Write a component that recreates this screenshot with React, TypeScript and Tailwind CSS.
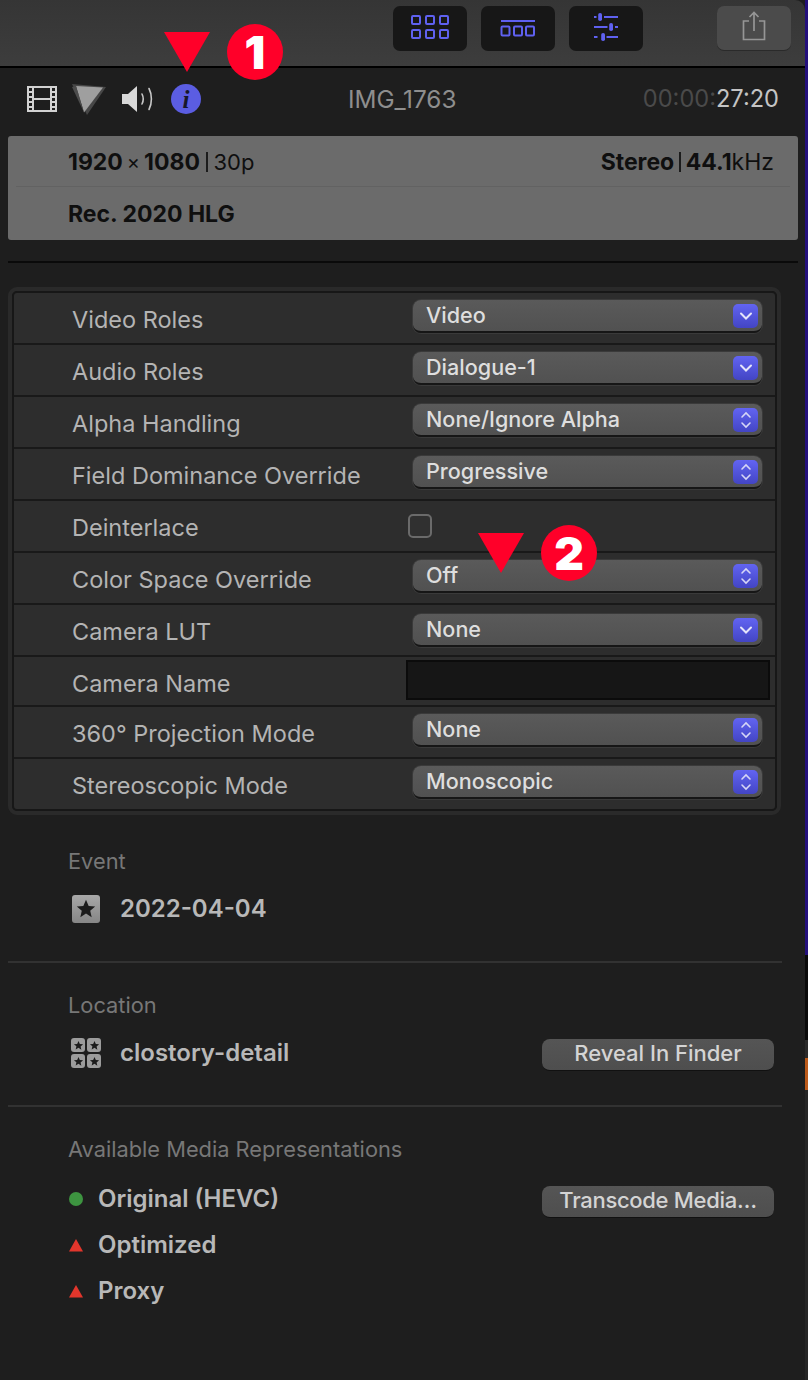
const fontStack = { fontFamily: 'Inter, "Liberation Sans", sans-serif' }

const rows = [
  { label: 'Video Roles', value: 'Video', kind: 'down' },
  { label: 'Audio Roles', value: 'Dialogue-1', kind: 'down' },
  { label: 'Alpha Handling', value: 'None/Ignore Alpha', kind: 'updown' },
  { label: 'Field Dominance Override', value: 'Progressive', kind: 'updown' },
  { label: 'Deinterlace', kind: 'check' },
  { label: 'Color Space Override', value: 'Off', kind: 'updown' },
  { label: 'Camera LUT', value: 'None', kind: 'down', low: true },
  { label: 'Camera Name', kind: 'input' },
  { label: '360° Projection Mode', value: 'None', kind: 'updown' },
  { label: 'Stereoscopic Mode', value: 'Monoscopic', kind: 'updown' },
]

const Star = ({ size, fill }: { size: number; fill: string }) => (
  <svg width={size} height={size} viewBox="0 0 24 24">
    <path
      d="M12 2l2.900 6.600 7.100.7-5.400 4.700 1.600 7L12 16.900 5.800 20.900l1.600-7L2 9.300l7.100-.7z"
      fill={fill}
    />
  </svg>
)

const PopupSelect = ({ value, kind, low }: { value: string; kind: string; low?: boolean }) => (
  <div
    className={`flex h-[33px] w-[349px] items-center rounded-[8px] border-b-2 border-[#161616] bg-gradient-to-b from-[#5a5a5a] to-[#515151] pl-[13px] pr-[4px] shadow-[0_0_0_1px_#3a3a3a] ${
      low ? 'mt-[9px]' : 'mt-[7px]'
    }`}
  >
    <span className="text-[21.600px] font-medium text-[#dedede]">{value}</span>
    <div className="ml-auto flex h-[24px] w-[25px] items-center justify-center rounded-[5px] bg-gradient-to-b from-[#6264f2] to-[#4345c4]">
      {kind === 'down' ? (
        <svg width="14" height="10" viewBox="0 0 14 10" fill="none">
          <path d="M2 2.500l5 5 5-5" stroke="#e4e4fa" strokeWidth="2" strokeLinecap="round" />
        </svg>
      ) : (
        <svg width="12" height="18" viewBox="0 0 12 18" fill="none">
          <path d="M2 6l4-4 4 4M2 12l4 4 4-4" stroke="#d6d6f6" strokeWidth="1.600" strokeLinecap="round" />
        </svg>
      )}
    </div>
  </div>
)

const SettingRow = ({ row, last }: { row: (typeof rows)[number]; last: boolean }) => (
  <div
    className={`flex items-start ${last ? 'h-[50px]' : 'border-b-2 border-[#191919]'} ${
      row.kind === 'input' ? 'h-[50px]' : last ? '' : 'h-[52px]'
    }`}
  >
    <div className="mt-[12px] w-[399px] pl-[58px] text-[23.500px] leading-[30px] whitespace-nowrap text-[#b4b4b4]">
      {row.label}
    </div>
    {row.kind === 'check' && (
      <div className="mt-[13px] -ml-[5px] h-[24px] w-[24px] rounded-[5px] border-2 border-[#6a6a6a] bg-[#303030]" />
    )}
    {row.kind === 'input' && (
      <div className="mt-[3px] -ml-[7px] h-[40px] w-[364px] border-2 border-[#0b0b0b] bg-[#161616]" />
    )}
    {row.value && <PopupSelect value={row.value} kind={row.kind} low={row.low} />}
  </div>
)

const ActionButton = ({ children, tight }: { children: string; tight?: boolean }) => (
  <div
    className={`flex h-[32px] w-[232px] items-center justify-center rounded-[8px] border-b border-[#111] bg-gradient-to-b from-[#555] to-[#4e4e4e] text-[22px] font-medium whitespace-nowrap text-[#d4d4d4] ${
      tight ? 'tracking-[-0.3px]' : ''
    }`}
  >
    <span className="-mt-[3px]">{children}</span>
  </div>
)

const ToolButton = ({ children }: { children: React.ReactNode }) => (
  <div className="flex h-[45px] w-[74px] items-center justify-center rounded-[7px] bg-[#171717]">{children}</div>
)

const Annotation = ({ n, className }: { n: string; className: string }) => (
  <div className={`absolute flex items-center ${className}`}>
    <svg width="46" height="40" viewBox="0 0 46 40">
      <path d="M0 0h46L23 40z" fill="#ff0029" />
    </svg>
    <div className="ml-[17px] flex h-[56px] w-[56px] items-center justify-center rounded-full bg-[#ff0029] text-[46px] leading-none font-black text-white">
      {n}
    </div>
  </div>
)

export default function App() {
  return (
    <div className="relative flex h-[1380px] w-[808px] overflow-hidden bg-[#1e1e1e]" style={fontStack}>
      <div className="flex w-[805px] flex-col">
        {/* top toolbar */}
        <div className="flex h-[68px] gap-[14px] rounded-tr-[10px] border-b-2 border-black bg-gradient-to-b from-[#353535] to-[#3d3d3d] pt-[6px] pl-[393px]">
          <ToolButton>
            <svg className="-mt-[3px]" width="40" height="26" viewBox="0 0 40 26" fill="none" stroke="#5f61f0" strokeWidth="2">
              <rect x="2" y="2" width="8" height="8" rx="1" />
              <rect x="16" y="2" width="8" height="8" rx="1" />
              <rect x="30" y="2" width="8" height="8" rx="1" />
              <rect x="2" y="16" width="8" height="8" rx="1" />
              <rect x="16" y="16" width="8" height="8" rx="1" />
              <rect x="30" y="16" width="8" height="8" rx="1" />
            </svg>
          </ToolButton>
          <ToolButton>
            <svg className="-mt-[2px]" width="36" height="18" viewBox="0 0 36 18" fill="none" stroke="#5f61f0" strokeWidth="2">
              <path d="M1 2h34" />
              <rect x="1.500" y="7.500" width="8" height="9" rx="1" />
              <rect x="14" y="7.500" width="8" height="9" rx="1" />
              <rect x="26" y="7.500" width="8" height="9" rx="1" />
            </svg>
          </ToolButton>
          <ToolButton>
            <svg className="-mt-[3px]" width="26" height="30" viewBox="0 0 26 30" fill="none">
              <path d="M1 5h2.500M11 5h14M1 15h13.500M22 15h3M1 25h3.500M13.500 25h11.500" stroke="#5f61f0" strokeWidth="1.800" />
              <rect x="5.200" y="1" width="3.800" height="8" rx="1.800" fill="#5f61f0" />
              <rect x="16.200" y="11" width="3.800" height="8" rx="1.800" fill="#5f61f0" />
              <rect x="8.200" y="21" width="3.800" height="8" rx="1.800" fill="#5f61f0" />
            </svg>
          </ToolButton>
          <div className="ml-[60px] flex h-[44px] w-[74px] items-center justify-center rounded-[7px] bg-[#4b4b4b] shadow-[0_1px_0_#2a2a2a]">
            <svg className="-mt-[4px]" width="24" height="30" viewBox="0 0 24 30" fill="none" stroke="#969696" strokeWidth="1.700">
              <path d="M7 10H1.500v18.500h21V10H17M12 20V1.500M7.500 6L12 1.500 16.500 6" />
            </svg>
          </div>
        </div>

        {/* inspector tabs */}
        <div className="flex h-[62px] items-center pl-[27px]">
          <svg width="30" height="26" viewBox="0 0 30 26">
            <path
              fillRule="evenodd"
              d="M0 0h30v26H0zM2 2v3h3V2zm0 5v3h3V7zm0 5v3h3v-3zm0 5v3h3v-3zm0 5v2h3v-2zM25 2v3h3V2zm0 5v3h3V7zm0 5v3h3v-3zm0 5v3h3v-3zm0 5v2h3v-2zM7 2v10h16V2zm0 12v10h16V14z"
              fill="#d2d2d2"
            />
          </svg>
          <svg className="ml-[14px]" width="36" height="32" viewBox="0 0 36 32">
            <path d="M1 1l34 3-19 28z" fill="#474747" />
            <path d="M5 3l27 1.500-19 25z" fill="#9f9f9f" />
            <path d="M5 3l8 26.500L1 4z" fill="#4c4c4c" />
          </svg>
          <svg className="ml-[14px]" width="32" height="28" viewBox="0 0 32 28" fill="none">
            <path d="M1 9h6l9-8v26l-9-8H1z" fill="#d8d8d8" />
            <path d="M21 9c1.500 3 1.500 7 0 10M28 3.500c3.200 6 3.200 15 0 21" stroke="#c8c8c8" strokeWidth="1.600" strokeLinecap="round" />
          </svg>
          <div
            className="ml-[18px] flex h-[30px] w-[30px] items-center justify-center rounded-full bg-[#5b5de2] text-[25px] leading-none font-bold text-[#17172a] italic"
            style={{ fontFamily: '"Liberation Serif", serif' }}
          >
            i
          </div>
          <div className="ml-[147px] text-[24.300px] text-[#8e8e8e]">IMG_1763</div>
          <div className="ml-auto pr-[26px] text-[23.600px] text-[#c4c4c4]">
            <span className="text-[#4a4a4a]">00:00:</span>27:20
          </div>
        </div>

        {/* summary card */}
        <div className="mt-[6px] ml-[8px] h-[104px] w-[790px] rounded-[3px] bg-[#6b6b6b] text-[#0f0f0f]">
          <div className="mx-[8px] flex h-[51px] items-center justify-between border-b border-[#626262] pt-[2px] pr-[16px] pl-[52px] text-[23px]">
            <div className="flex items-center">
              <b className="font-bold">1920</b>
              <span className="mx-[4px] text-[20px]">×</span>
              <b className="font-bold">1080</b>
              <span className="mx-[6px] h-[20px] w-[1.500px] bg-[#1c1c1c]" />
              <span className="text-[22px]">30p</span>
            </div>
            <div className="flex items-center">
              <b className="font-bold">Stereo</b>
              <span className="mx-[5px] h-[20px] w-[1.500px] bg-[#1c1c1c]" />
              <b className="font-bold">44.1</b>
              <span>kHz</span>
            </div>
          </div>
          <div className="flex h-[53px] items-center pt-[1px] pl-[60px] text-[23px] font-bold">Rec. 2020 HLG</div>
        </div>

        <div className="mt-[21px] ml-[8px] h-[2px] w-[790px] bg-[#0a0a0a]" />

        {/* settings table */}
        <div className="mt-[24px] ml-[8px] w-[773px] rounded-[9px] border-[4px] border-[#2a2a2a]">
          <div className="rounded-[5px] border-2 border-[#171717] bg-[#2d2d2d]">
            {rows.map((row, i) => (
              <SettingRow key={row.label} row={row} last={i === rows.length - 1} />
            ))}
          </div>
        </div>

        {/* event */}
        <div className="mt-[31px] ml-[8px] h-[117px] w-[774px] border-b-2 border-[#323232] pl-[60px]">
          <div className="text-[21.800px] leading-[30px] text-[#777]">Event</div>
          <div className="mt-[15px] flex items-center">
            <div className="ml-[4px] flex h-[28px] w-[28px] items-center justify-center rounded-[3px] bg-gradient-to-b from-[#a8a8a8] to-[#868686]">
              <Star size={22} fill="#1c1c1c" />
            </div>
            <span className="ml-[20px] text-[24px] font-semibold text-[#b8b8b8]">2022-04-04</span>
          </div>
        </div>

        {/* location */}
        <div className="ml-[8px] h-[144px] w-[774px] border-b-2 border-[#323232] pl-[60px]">
          <div className="mt-[27px] text-[21.800px] leading-[30px] text-[#777]">Location</div>
          <div className="mt-[15px] flex items-center">
            <div className="ml-[3px] grid h-[30px] w-[30px] grid-cols-2 gap-[2px]">
              {[0, 1, 2, 3].map((s) => (
                <div key={s} className="flex items-center justify-center rounded-[3px] bg-[#9c9c9c]">
                  <Star size={11} fill="#1c1c1c" />
                </div>
              ))}
            </div>
            <span className="ml-[19px] text-[24px] font-semibold text-[#b8b8b8]">clostory-detail</span>
            <div className="mt-[4px] ml-auto pr-[8px]">
              <ActionButton>Reveal In Finder</ActionButton>
            </div>
          </div>
        </div>

        {/* media representations */}
        <div className="ml-[8px] w-[774px] pl-[60px]">
          <div className="mt-[27px] text-[21.800px] leading-[30px] text-[#777]">Available Media Representations</div>
          <div className="mt-[20px] flex h-[30px] items-center">
            <div className="ml-[1px] h-[14px] w-[14px] rounded-full bg-[#3d9440]" />
            <span className="ml-[15px] text-[24px] font-semibold text-[#b8b8b8]">Original (HEVC)</span>
            <div className="mt-[6px] ml-auto pr-[8px]">
              <ActionButton tight>Transcode Media…</ActionButton>
            </div>
          </div>
          {['Optimized', 'Proxy'].map((name) => (
            <div key={name} className="mt-[16px] flex h-[30px] items-center">
              <svg className="ml-[1px]" width="14" height="13" viewBox="0 0 14 13">
                <path d="M7 0l7 12.500H0z" fill="#e2362c" />
              </svg>
              <span className="ml-[15px] text-[24px] font-semibold text-[#b8b8b8]">{name}</span>
            </div>
          ))}
        </div>
      </div>

      {/* sliver of the window behind */}
      <div className="flex w-[3px] flex-col">
        <div className="h-[955px] bg-[#24107c]" />
        <div className="h-[85px] bg-[#0a0a0a]" />
        <div className="h-[18px] bg-[#2a2a2a]" />
        <div className="h-[32px] bg-[#bb5a1a]" />
        <div className="flex-1 bg-[#262626]" />
      </div>

      {/* tutorial markers */}
      <Annotation n="1" className="top-[24px] left-[164px]" />
      <Annotation n="2" className="top-[525px] left-[478px]" />
    </div>
  )
}
